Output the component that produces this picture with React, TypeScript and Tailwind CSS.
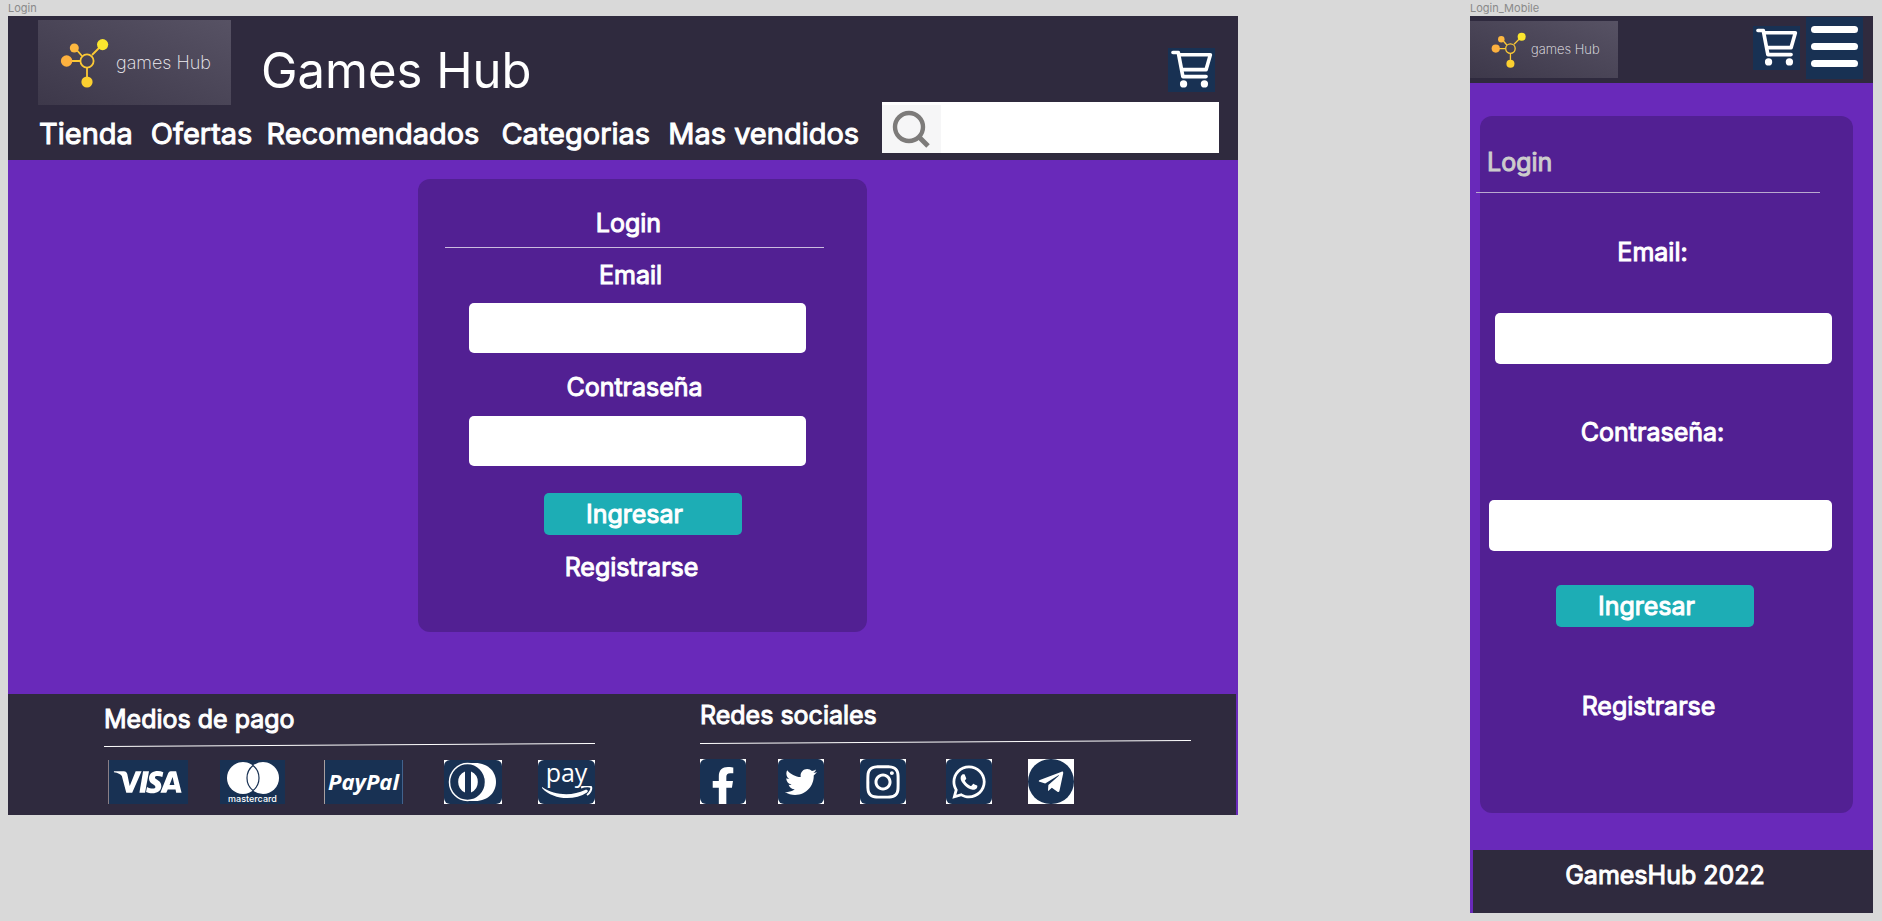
import type { ReactNode } from "react";
import { FaFacebookF, FaInstagram, FaTelegramPlane, FaTwitter, FaWhatsapp } from "react-icons/fa";

function Logo({ compact = false }: { compact?: boolean }) {
  return (
    <a
      href="#inicio"
      className={
        compact
          ? "flex h-[57px] w-[148px] items-center gap-1 bg-linear-to-tr from-[#3d384a] to-[#575264] pl-[21px]"
          : "flex h-[85px] w-[193px] items-center gap-1.5 bg-linear-to-tr from-[#3d384a] to-[#575264] pl-[22px]"
      }
    >
      <svg viewBox="0 0 50 52" className={compact ? "h-[38px] w-[36px]" : "h-[52px] w-[50px]"} aria-hidden="true">
        <g stroke="#fcc935" strokeWidth="1.8" fill="none">
          <path d="M7 24H20M15 11L22 19M42 8L32 18M27 31V43" />
          <circle cx="27" cy="24" r="6.6" />
        </g>
        <circle cx="6.6" cy="24" r="5.7" fill="#fdb13f" />
        <circle cx="14.3" cy="11" r="4.5" fill="#fdb840" />
        <circle cx="42.6" cy="7.6" r="5.6" fill="#fbe62e" />
        <circle cx="27" cy="45" r="5.6" fill="#fcd030" />
      </svg>
      <span className={compact ? "text-[13px] font-extralight text-[#f0eef3]" : "text-lg font-extralight text-[#f0eef3]"}>
        games Hub
      </span>
    </a>
  );
}

function CartButton() {
  return (
    <button type="button" aria-label="Carrito" className="h-[44px] w-[47px] shrink-0 bg-[#183153]">
      <svg viewBox="0 0 142 132" className="h-full w-full" fill="none" stroke="#fff" strokeWidth="11" strokeLinecap="round" strokeLinejoin="round" aria-hidden="true">
        <path d="M15 13H31L45 86H115" />
        <path d="M34 20H128L115 65H42" />
        <circle cx="47" cy="108" r="11" fill="#fff" stroke="none" />
        <circle cx="110" cy="108" r="11" fill="#fff" stroke="none" />
      </svg>
    </button>
  );
}

function SlopedRule() {
  return (
    <svg className="block h-1 w-full" aria-hidden="true">
      <line x1="0" y1="88%" x2="100%" y2="12%" stroke="#fff" strokeWidth="1" />
    </svg>
  );
}

function SocialLink({ label, className, children }: { label: string; className: string; children: ReactNode }) {
  return (
    <a href={"#" + label.toLowerCase()} aria-label={label} className="h-[45px] w-[46px] bg-white text-white">
      <span className={className}>{children}</span>
    </a>
  );
}

const squareTile = "flex h-full w-full items-center justify-center rounded-md bg-[#183153]";
const roundTile = "flex h-full w-full items-center justify-center rounded-full bg-[#183153]";

function DesktopLogin() {
  return (
    <section className="min-w-0 grow-[1230] basis-0">
      <h2 className="h-4 text-[11px] leading-4 text-[#8a8a8a]">Login</h2>
      <div className="bg-[#6929ba]">
        <header className="bg-[#2f2a3e] pt-1">
          <div className="flex pr-[23px] pl-[30px]">
            <Logo />
            <h1 className="pt-5 pl-[30px] text-[49px] leading-[62px] font-normal">Games Hub</h1>
            <div className="ml-auto pt-7">
              <CartButton />
            </div>
          </div>
          <div className="-mt-[3px] flex items-start justify-between pr-[19px] pb-1.5 pl-[31px]">
            <nav className="flex pt-3 text-[29px] leading-10 font-normal whitespace-nowrap [-webkit-text-stroke:1px_#fff]">
              <a href="#tienda">Tienda</a>
              <a href="#ofertas" className="ml-[18px]">Ofertas</a>
              <a href="#recomendados" className="ml-3.5">Recomendados</a>
              <a href="#categorias" className="ml-[22px]">Categorias</a>
              <a href="#vendidos" className="ml-[18px]">Mas vendidos</a>
            </nav>
            <label className="flex h-[51px] w-[337px] items-end bg-white">
              <span className="flex h-12 w-[59px] items-center justify-center bg-[#f6f6f7]">
                <svg viewBox="0 0 40 40" className="h-10 w-10" fill="none" stroke="#7d7b7a" strokeWidth="4.4" aria-hidden="true">
                  <circle cx="17" cy="18" r="14" />
                  <path d="M26 27L36 37" strokeWidth="5" />
                </svg>
              </span>
              <input type="search" aria-label="Buscar" className="h-full min-w-0 flex-1 px-2 text-xl text-black outline-none" />
            </label>
          </div>
        </header>

        <main className="pt-[19px] pb-[62px] pl-[39px]">
          <form className="mx-auto flex h-[453px] w-[449px] flex-col items-center rounded-xl bg-[#522093] text-[25px] leading-8 font-normal">
            <h3 className="pt-7 pr-7 [-webkit-text-stroke:1px_#fff]">Login</h3>
            <hr className="mt-2 mr-4 w-[379px] border-[#cbbcdf]" />
            <label htmlFor="email" className="mt-[11px] pr-6 [-webkit-text-stroke:1px_#fff]">Email</label>
            <input id="email" type="email" className="mt-3 mr-2.5 h-[50px] w-[337px] rounded-[5px] bg-white px-3 text-xl text-black outline-none" />
            <label htmlFor="clave" className="mt-[18px] pr-4 [-webkit-text-stroke:1px_#fff]">Contraseña</label>
            <input id="clave" type="password" className="mt-[13px] mr-2.5 h-[50px] w-[337px] rounded-[5px] bg-white px-3 text-xl text-black outline-none" />
            <button type="button" className="mt-[27px] h-[42px] w-[198px] rounded-[5px] bg-[#1dadb5] pr-4 [-webkit-text-stroke:1px_#fff]">Ingresar</button>
            <a href="#registro" className="mt-4 pr-[22px] [-webkit-text-stroke:1px_#fff]">Registrarse</a>
          </form>
        </main>

        <footer className="mr-0.5 flex justify-between bg-[#2f2a3e] pr-[45px] pb-[11px] pl-24 text-[25px] leading-8 font-normal">
          <div className="w-[491px] pt-[9px]">
            <h3 className="[-webkit-text-stroke:1px_#fff]">Medios de pago</h3>
            <div className="mt-2"><SlopedRule /></div>
            <div className="mt-[13px] flex h-11 pl-1 text-white">
              <div className="flex w-[80px] items-center justify-center border-l border-[#8a7f86] bg-[#183153]">
                <svg viewBox="0 0 80 44" className="h-full w-full" fill="#fff" role="img" aria-label="Visa">
                  <path d="M5 11H15C17 11 18 12 18.500 14L21 26L27 11H33L23.500 33H17.500L13 16C12 14 9 12.500 5 12Z" />
                  <path d="M34.500 11H40.500L36.500 33H30.800Z" />
                  <path d="M55 12L54 17C51 15.700 46.500 15.400 46.500 17.500C46.500 19.500 53 20.500 53 26C53 34 43 34.500 37.500 32L38.500 27C42 29 47 29.400 47 27C47 24.500 40.500 24 40.500 18.500C40.500 11 49 9.500 55 12Z" />
                  <path fillRule="evenodd" d="M62.500 11H68L73.500 33H68L67.400 29.500H59.500L58 33H52L60 13C60.500 11.800 61.300 11 62.500 11ZM64.400 17L61.300 25H66.200Z" />
                </svg>
              </div>
              <div className="ml-8 flex w-[65px] flex-col items-center bg-[#183153]">
                <svg viewBox="0 0 54 34" className="h-[34px] w-[54px]" role="img" aria-label="Mastercard">
                  <circle cx="17" cy="18" r="16" fill="#fff" />
                  <circle cx="37" cy="18" r="16" fill="#fff" />
                  <path d="M27 5.500A16 16 0 0 1 27 30.500A16 16 0 0 1 27 5.500Z" fill="#fff" stroke="#183153" strokeWidth="1.200" />
                </svg>
                <span className="text-[9px] leading-[9px] font-medium">mastercard</span>
              </div>
              <div className="ml-[39px] flex w-[79px] items-center justify-center border-x border-l-[#a89f9f] border-r-[#42628c] bg-[#183153] pb-0.5 font-['Open_Sans'] text-[22px] leading-6 font-bold italic">
                PayPal
              </div>
              <div className="ml-[41px] w-[58px] bg-white">
                <div className="flex h-full items-center justify-center rounded-md bg-[#183153]">
                  <svg viewBox="0 0 50 40" className="h-10 w-[50px]" role="img" aria-label="Diners Club">
                    <path d="M20 1H27C55 1 55 39 27 39H20Z" fill="#fff" />
                    <ellipse cx="19.500" cy="20" rx="18" ry="18.500" fill="#183153" stroke="#fff" strokeWidth="1.500" />
                    <path d="M17 9.500A11.500 11.500 0 0 0 17 30.500ZM23 9.500A11.500 11.500 0 0 1 23 30.500Z" fill="#fff" />
                  </svg>
                </div>
              </div>
              <div className="ml-9 w-[57px] bg-white">
                <div className="flex h-full flex-col items-center rounded-md bg-[#183153]">
                  <span className="h-[26px] font-['Open_Sans'] text-[25px] leading-6 font-medium">pay</span>
                  <svg viewBox="0 0 52 15" className="h-[15px] w-[52px]" aria-hidden="true">
                    <path d="M1 1C14 10 32 10 44 4C46 3 48 5 46 6.500C33 15 12 14 1 2Z" fill="#fff" />
                    <path d="M40 1.500C44 0 49 0 50 1C51 3 49 7 46 9" fill="none" stroke="#fff" strokeWidth="2" />
                  </svg>
                </div>
              </div>
            </div>
          </div>
          <div className="w-[491px] pt-[5px]">
            <h3 className="[-webkit-text-stroke:1px_#fff]">Redes sociales</h3>
            <div className="mt-[9px]"><SlopedRule /></div>
            <div className="mt-[15px] flex">
              <SocialLink label="Facebook" className={squareTile}><FaFacebookF className="-mb-2 h-[37px] w-6" preserveAspectRatio="none" /></SocialLink>
              <div className="ml-8 flex"><SocialLink label="Twitter" className={squareTile}><FaTwitter className="h-8 w-8" /></SocialLink></div>
              <div className="ml-9 flex"><SocialLink label="Instagram" className={squareTile}><FaInstagram className="h-[38px] w-[38px]" /></SocialLink></div>
              <div className="ml-10 flex"><SocialLink label="WhatsApp" className={squareTile}><FaWhatsapp className="h-[38px] w-[38px]" /></SocialLink></div>
              <div className="ml-9 flex"><SocialLink label="Telegram" className={roundTile}><FaTelegramPlane className="h-7 w-7" /></SocialLink></div>
            </div>
          </div>
        </footer>
      </div>
    </section>
  );
}

function MobileLogin() {
  return (
    <section className="min-w-0 grow-[403] basis-0">
      <h2 className="h-4 text-[11px] leading-4 text-[#8a8a8a]">Login_Mobile</h2>
      <div className="bg-[#6929ba]">
        <header className="flex h-[67px] bg-[#2f2a3e] pr-2.5">
          <div className="pt-[5px]"><Logo compact /></div>
          <div className="ml-auto pt-2.5"><CartButton /></div>
          <button type="button" aria-label="Menú" className="mt-px ml-1.5 flex h-[62px] w-[57px] flex-col items-center gap-2.5 bg-[#183153] pt-[9px]">
            <span className="h-[7px] w-[47px] rounded-full bg-white" />
            <span className="h-[7px] w-[47px] rounded-full bg-white" />
            <span className="h-[7px] w-[47px] rounded-full bg-white" />
          </button>
        </header>

        <main className="pt-[33px] pr-5 pb-[37px] pl-2.5">
          <form className="flex h-[697px] flex-col items-center rounded-xl bg-[#522093] text-[25px] leading-8 font-normal">
            <h3 className="self-start pt-[30px] pl-[7px] text-[#cccccc] [-webkit-text-stroke:1px_#ccc]">Login</h3>
            <hr className="mt-3.5 -ml-1 w-[344px] self-start border-[#b9a9cf]" />
            <label htmlFor="email-movil" className="mt-[43px] pr-7 [-webkit-text-stroke:1px_#fff]">Email:</label>
            <input id="email-movil" type="email" className="mt-[45px] mr-[21px] h-[51px] w-[337px] self-end rounded-[5px] bg-white px-3 text-xl text-black outline-none" />
            <label htmlFor="clave-movil" className="mt-[52px] pr-7 [-webkit-text-stroke:1px_#fff]">Contraseña:</label>
            <input id="clave-movil" type="password" className="mt-[52px] mr-[21px] h-[51px] w-[343px] self-end rounded-[5px] bg-white px-3 text-xl text-black outline-none" />
            <button type="button" className="mt-[34px] mr-6 h-[42px] w-[198px] rounded-[5px] bg-[#1dadb5] pr-4 [-webkit-text-stroke:1px_#fff]">Ingresar</button>
            <a href="#registro" className="mt-[63px] pr-9 [-webkit-text-stroke:1px_#fff]">Registrarse</a>
          </form>
        </main>

        <footer className="ml-[3px] bg-[#2f2a3e] pt-[9px] pr-4 pb-[22px] text-center text-[25px] leading-8 font-normal [-webkit-text-stroke:1px_#fff]">
          GamesHub 2022
        </footer>
      </div>
    </section>
  );
}

export default function App() {
  return (
    <div className="flex min-h-screen items-start gap-[232px] bg-[#d9d9d9] pr-[9px] pl-2 font-['Inter',sans-serif] text-white">
      <DesktopLogin />
      <MobileLogin />
    </div>
  );
}
